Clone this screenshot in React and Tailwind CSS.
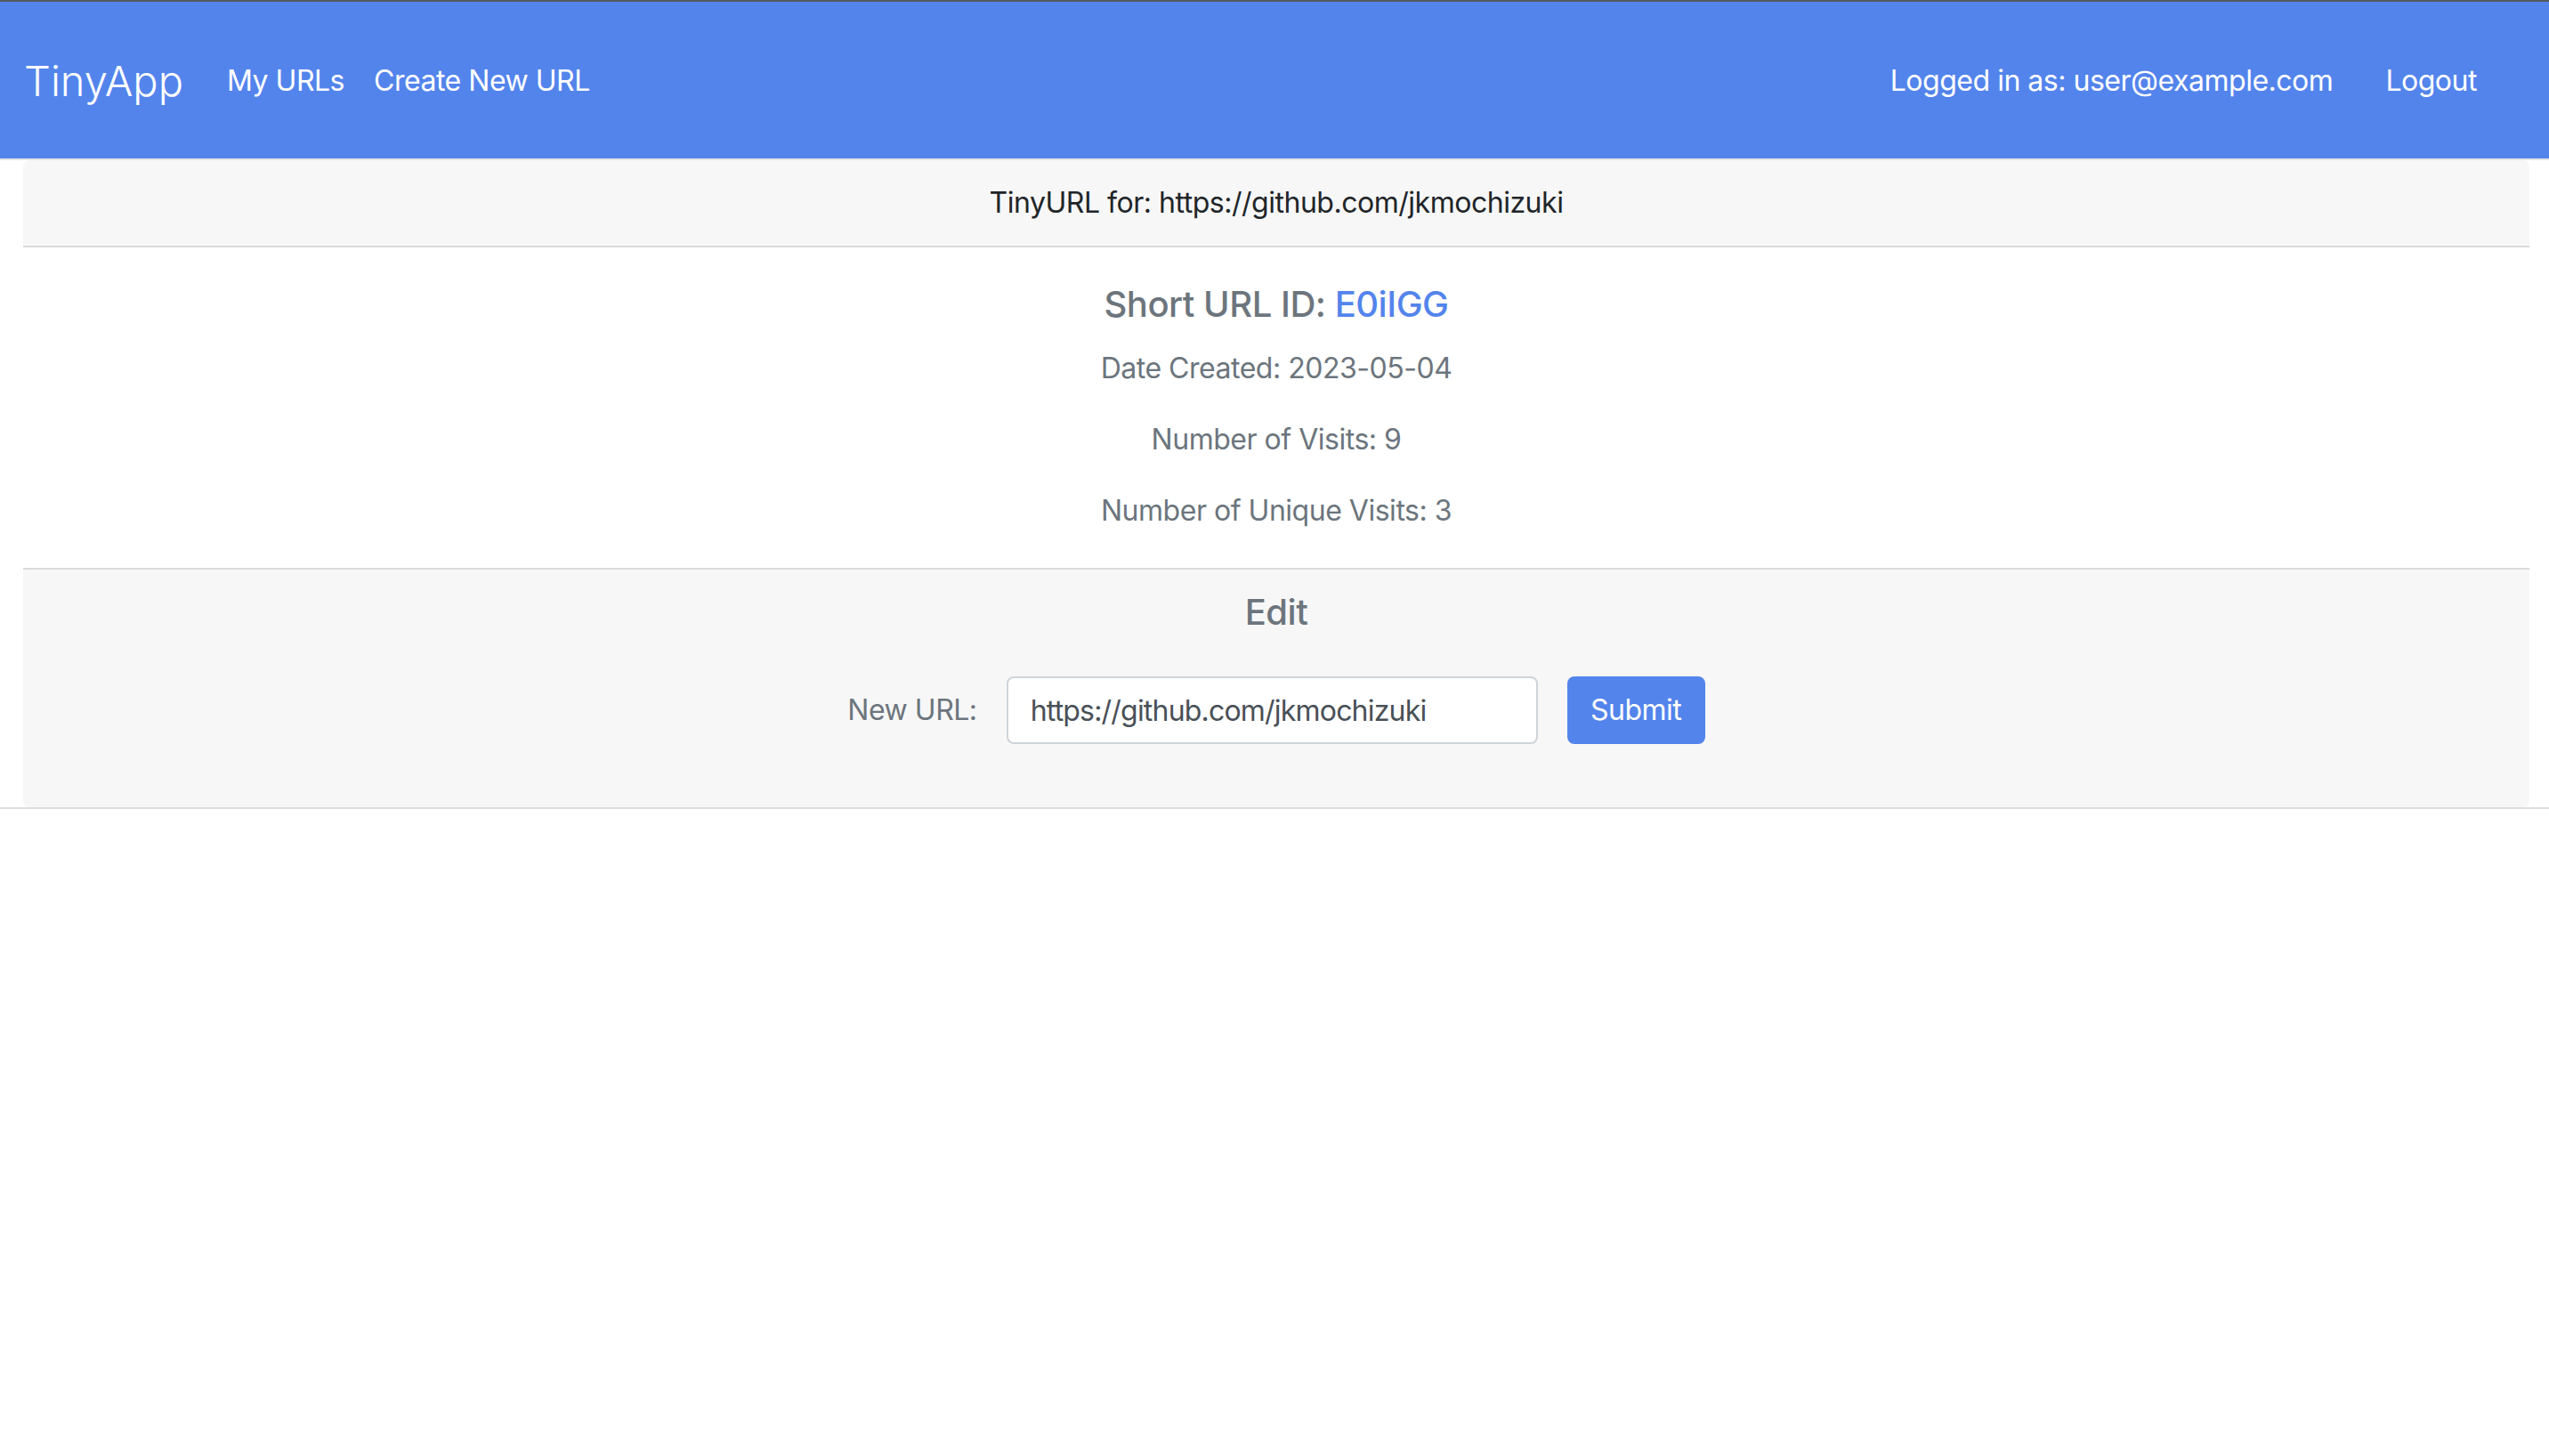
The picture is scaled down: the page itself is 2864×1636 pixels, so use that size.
import React from 'react';

const NavBar = () => (
  <nav className="h-[178px] bg-[#5384ec] border-b-2 border-[#e3e3e3] flex items-center pl-[27px] pr-[81px] text-white">
    <span className="text-[47px] font-light leading-none tracking-normal mr-[49px]">TinyApp</span>
    <div className="flex items-center gap-[33px] text-[32px] pt-[2px]">
      <span>My URLs</span>
      <span>Create New URL</span>
    </div>
    <div className="ml-auto flex items-center gap-[59px] text-[32px] pt-[2px]">
      <span>Logged in as: user@example.com</span>
      <span>Logout</span>
    </div>
  </nav>
);

const App = () => {
  const longUrl = 'https://github.com/jkmochizuki';

  return (
    <div className="min-h-screen bg-white font-['Inter','Liberation_Sans',sans-serif] tracking-[-0.03em]">
      {/* thin top edge */}
      <div className="h-[2px] bg-[#55595e]" />
      <NavBar />

      {/* URL card */}
      <div className="ml-[26px] mr-[22px] rounded-[8px] overflow-hidden bg-white">
        <div className="h-[98px] bg-[#f7f7f7] border-b-2 border-[#dadada] flex items-center justify-center text-[32px] text-[#212529]">
          TinyURL for: {longUrl}
        </div>

        <div className="py-[40px] text-center text-[#6c757d]">
          <h5 className="text-[40px] font-medium leading-[48px] mb-[24px]">
            Short URL ID: <span className="text-[#5384ec]">E0iIGG</span>
          </h5>
          <p className="text-[32px] leading-[48px] mb-[32px]">Date Created: 2023-05-04</p>
          <p className="text-[32px] leading-[48px] mb-[32px]">Number of Visits: 9</p>
          <p className="text-[32px] leading-[48px]">Number of Unique Visits: 3</p>
        </div>

        <div className="border-t-2 border-[#dadada] bg-[#f7f7f7] pt-[24px] pb-[71px] text-center">
          <h5 className="text-[40px] font-medium leading-[48px] text-[#6c757d]">Edit</h5>
          <form className="mt-[48px] flex items-center justify-center gap-[33px]" onSubmit={(e) => e.preventDefault()}>
            <label className="text-[32px] text-[#6c757d]">New URL:</label>
            <input
              type="text"
              defaultValue={longUrl}
              className="h-[76px] w-[597px] bg-white border-2 border-[#ced4da] rounded-[8px] px-[25px] text-[32px] tracking-[-0.025em] text-[#495057] outline-none"
            />
            <button
              type="submit"
              className="h-[76px] w-[155px] rounded-[8px] bg-[#5384ec] text-white text-[32px]"
            >
              Submit
            </button>
          </form>
        </div>
      </div>
      <div className="h-[2px] bg-[#dedede]" />
    </div>
  );
};

export default App;
